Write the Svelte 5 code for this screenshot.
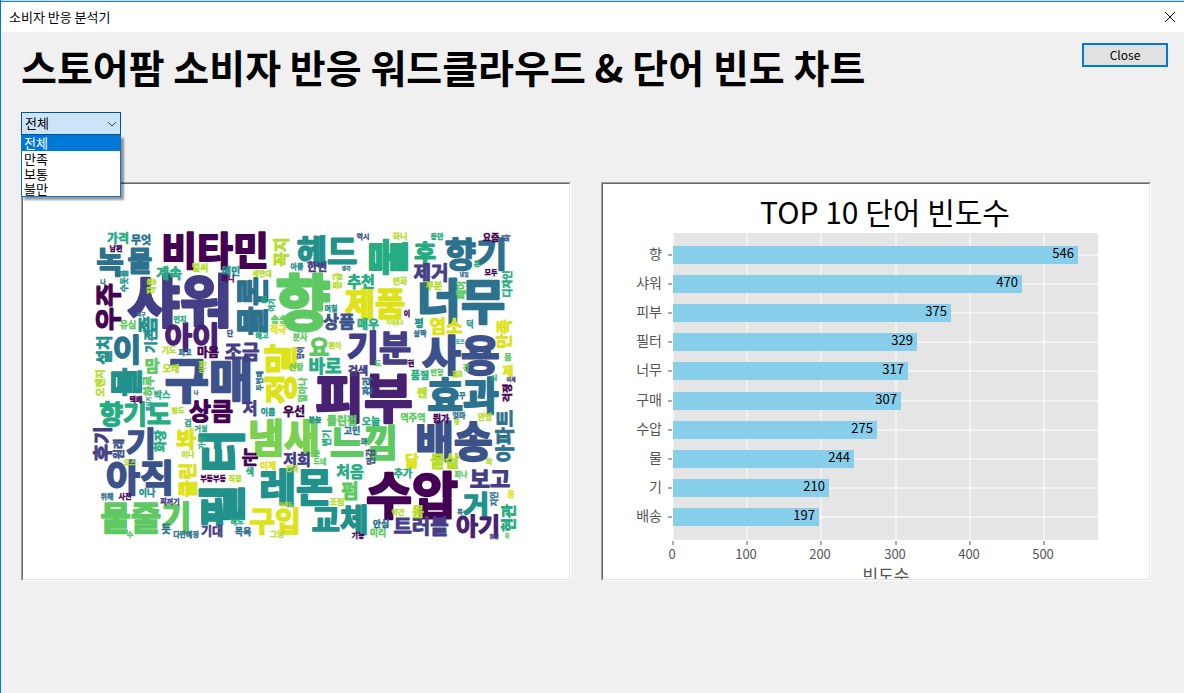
<script>
  const options = ['전체', '만족', '보통', '불만'];
  let selected = $state('전체');

  const bars = [
    ['향', 546], ['샤워', 470], ['피부', 375], ['필터', 329], ['너무', 317],
    ['구매', 307], ['수압', 275], ['물', 244], ['기', 210], ['배송', 197]
  ];
  const ticks = [0, 100, 200, 300, 400, 500];
  const scaleX = (v) => Math.round(70 + v * 0.742);
  const rowY = (i) => Math.round(71 + i * 29.1);

  const palette = {
    P: '#440154', V: '#482173', I: '#433e85', B: '#3b528b', S: '#2c728e',
    T: '#21918c', G: '#25ac82', L: '#5ec962', M: '#7ad151', Y: '#b5de2b', N: '#dde318'
  };

  // word, centre x, centre y, cell size, palette key, 1 when the word reads upwards
  const words = [
    ['가격', 118, 239, 13, 'G'], ['무엇', 141, 240, 12, 'S'], ['남편', 116, 248, 7, 'P'],
    ['녹', 110, 262, 32, 'S'], ['물', 140, 261, 29, 'S'], ['비타민', 215, 251, 42, 'P'],
    ['계속', 169, 273, 15, 'G'], ['벌써', 200, 268, 10, 'Y'], ['예민', 231, 271, 11, 'T'],
    ['머니', 228, 278, 7, 'P'], ['샤워', 180, 301, 61, 'I'], ['수돗물', 124, 281, 9, 'T', 1],
    ['나', 103, 282, 6, 'S'], ['작용', 152, 286, 10, 'Y', 1], ['우주', 108, 307, 28, 'P', 1],
    ['유심', 128, 325, 10, 'L'], ['좀', 148, 325, 20, 'T', 1], ['피구', 141, 314, 5, 'S'],
    ['먼지', 180, 319, 7, 'G'], ['아이', 192, 337, 32, 'V'], ['단', 230, 333, 7, 'B'],
    ['꼭지', 281, 252, 17, 'Y', 1], ['헤드', 327, 252, 36, 'T'], ['역시', 363, 236, 8, 'B'],
    ['한번', 317, 267, 12, 'I'], ['아들', 297, 266, 7, 'T'], ['생각', 346, 268, 5, 'S'],
    ['세면대', 262, 273, 8, 'Y'], ['향', 303, 303, 65, 'L'], ['물론', 252, 306, 34, 'S', 1],
    ['감', 264, 299, 8, 'G'], ['여기', 271, 305, 7, 'G', 1], ['등급', 338, 281, 10, 'Y', 1],
    ['추천', 361, 281, 16, 'G'], ['제품', 375, 304, 35, 'N'], ['며칠', 331, 308, 7, 'T'],
    ['상품', 339, 322, 18, 'B'], ['매우', 368, 325, 13, 'G'], ['송송', 279, 320, 10, 'L'],
    ['적극', 278, 330, 10, 'N'], ['배고', 262, 335, 7, 'G'], ['분사', 300, 337, 9, 'L'],
    ['하니', 400, 236, 9, 'Y'], ['동안', 437, 236, 7, 'G'], ['요즘', 491, 238, 10, 'P'],
    ['화', 506, 238, 9, 'B', 1], ['후', 425, 253, 26, 'G'], ['향기', 476, 254, 37, 'S'],
    ['분', 477, 263, 8, 'G'], ['냄일', 464, 274, 5, 'S'], ['모두', 491, 272, 7, 'P'],
    ['디자인', 507, 284, 11, 'G', 1], ['물', 388, 257, 44, 'G', 1], ['제거', 431, 273, 20, 'I'],
    ['변화', 400, 281, 9, 'Y'], ['부분', 434, 286, 10, 'Y'], ['페이', 461, 290, 11, 'L', 1],
    ['너무', 461, 301, 52, 'S'], ['이', 407, 313, 7, 'P'], ['기대음수', 395, 322, 5, 'Y'],
    ['평', 419, 323, 11, 'T'], ['살짝', 420, 333, 7, 'S'], ['염소', 446, 326, 19, 'N'],
    ['덕', 470, 324, 9, 'T'], ['만족', 504, 334, 17, 'N', 1], ['설치', 104, 350, 17, 'T', 1],
    ['이', 127, 350, 33, 'S'], ['기존', 150, 341, 14, 'T', 1], ['기도', 169, 350, 9, 'Y'],
    ['피고', 185, 352, 7, 'S'], ['마음', 208, 353, 13, 'P'], ['조금', 242, 352, 20, 'I'],
    ['오래', 171, 369, 10, 'Y'], ['구매', 209, 380, 52, 'B'], ['맘', 152, 366, 17, 'L'],
    ['하루', 149, 386, 12, 'L', 1], ['오렌지', 100, 383, 11, 'Y', 1], ['물', 126, 382, 34, 'T', 1],
    ['택배', 136, 399, 7, 'P'], ['박스', 162, 395, 10, 'G'], ['이번', 202, 367, 8, 'Y', 1],
    ['편리기', 148, 404, 5, 'T', 1], ['나', 196, 392, 5, 'B'], ['향기도', 135, 414, 28, 'G'],
    ['방도', 178, 410, 7, 'Y'], ['상큼', 211, 411, 26, 'P'], ['겁', 188, 423, 9, 'G'],
    ['거실', 201, 428, 7, 'G'], ['정말', 281, 374, 36, 'N', 1], ['요', 319, 347, 24, 'L'],
    ['향이', 300, 353, 7, 'B', 1], ['편이', 335, 345, 7, 'Y'], ['신랑', 296, 367, 9, 'L'],
    ['바로', 325, 366, 19, 'G'], ['기분', 379, 348, 38, 'I'], ['검색', 358, 371, 12, 'I'],
    ['관리', 367, 386, 11, 'S', 1], ['두번째', 259, 381, 7, 'S', 1], ['얼마나', 303, 390, 10, 'L', 1],
    ['피부', 364, 398, 57, 'V'], ['저', 250, 408, 17, 'I'], ['이름', 268, 412, 9, 'T'],
    ['우선', 294, 412, 13, 'P'], ['분높', 315, 419, 7, 'T'], ['클린펌', 342, 421, 12, 'L'],
    ['오늘', 371, 421, 11, 'G'], ['냄새', 284, 438, 42, 'M'], ['고민', 352, 431, 10, 'S'],
    ['사용', 461, 355, 45, 'B'], ['도', 378, 363, 7, 'L'], ['현', 411, 363, 7, 'P'],
    ['오즈', 460, 341, 5, 'G'], ['품질', 420, 375, 11, 'G'], ['반항', 437, 372, 7, 'L'],
    ['펌', 458, 374, 10, 'Y', 1], ['건', 466, 367, 8, 'L'], ['몸', 508, 357, 9, 'L'],
    ['시', 494, 377, 7, 'G'], ['제', 508, 372, 13, 'N'], ['미세', 511, 379, 5, 'I'],
    ['쎈', 422, 393, 12, 'Y'], ['효과', 463, 396, 42, 'S'], ['자꾸', 459, 395, 7, 'S'],
    ['걱정', 507, 393, 11, 'P', 1], ['역주역', 413, 418, 10, 'L'], ['뭔가', 441, 419, 10, 'P'],
    ['얼마', 459, 415, 7, 'S'], ['짱', 457, 422, 6, 'Y'], ['안방', 485, 417, 9, 'Y'],
    ['아파트', 505, 436, 20, 'S', 1], ['배송', 454, 441, 45, 'B'], ['느낌', 364, 443, 40, 'L'],
    ['후기', 103, 444, 20, 'I', 1], ['기', 141, 444, 36, 'B'], ['원래', 119, 449, 12, 'B', 1],
    ['화장', 161, 441, 13, 'G', 1], ['오스', 130, 462, 7, 'Y'], ['봐', 186, 439, 24, 'N'],
    ['이나', 188, 454, 8, 'Y'], ['가족', 201, 443, 8, 'G', 1], ['아직', 140, 478, 40, 'B'],
    ['클린', 188, 480, 20, 'N', 1], ['위해', 107, 496, 7, 'S'], ['사진', 125, 496, 7, 'P'],
    ['이나', 147, 493, 10, 'T'], ['찌꺼기', 170, 501, 7, 'I'], ['부등부등', 213, 478, 7, 'P'],
    ['직접', 235, 478, 7, 'Y'], ['필', 222, 506, 51, 'T', 1], ['터', 222, 451, 51, 'T', 1],
    ['물줄기', 146, 518, 36, 'L'], ['수', 130, 534, 7, 'L'], ['듯', 166, 529, 11, 'S'],
    ['다만예정', 186, 534, 7, 'S'], ['기대', 212, 532, 13, 'I'], ['눈', 250, 457, 19, 'P'],
    ['이제', 268, 466, 10, 'N'], ['색', 250, 472, 10, 'G'], ['저희', 297, 459, 16, 'I'],
    ['건과', 292, 468, 7, 'Y'], ['드네', 320, 461, 7, 'L'], ['문', 317, 453, 7, 'L'],
    ['변기', 327, 438, 10, 'G', 1], ['와', 364, 441, 8, 'S'], ['민감', 371, 457, 10, 'B', 1],
    ['처음', 350, 471, 16, 'G'], ['레몬', 296, 487, 43, 'T'], ['펌', 350, 491, 20, 'L'],
    ['조립', 337, 502, 9, 'Y'], ['아직도', 286, 504, 5, 'Y'], ['구입', 275, 522, 30, 'N'],
    ['교체', 340, 520, 33, 'T'], ['해도', 237, 521, 7, 'G'], ['목욕', 243, 532, 10, 'S'],
    ['그냥', 277, 534, 9, 'Y'], ['기능', 358, 535, 7, 'P'], ['미리', 378, 533, 10, 'L'],
    ['안심', 381, 524, 10, 'S'], ['추가', 403, 473, 11, 'G'], ['닮', 412, 460, 16, 'N'],
    ['물살', 445, 461, 17, 'Y'], ['착', 489, 461, 7, 'Y'], ['수압', 412, 495, 54, 'P'],
    ['피나', 461, 474, 7, 'L'], ['보고', 490, 479, 24, 'I'], ['약간', 398, 512, 7, 'Y'],
    ['몸', 418, 511, 14, 'Y'], ['거', 476, 506, 31, 'T'], ['폭', 460, 512, 6, 'S'],
    ['지인', 494, 499, 9, 'S', 1], ['용', 511, 494, 9, 'N'], ['현관', 508, 518, 16, 'G', 1],
    ['트러블', 421, 527, 22, 'I'], ['아기', 478, 526, 26, 'V'], ['환절', 494, 536, 5, 'I'],
    ['원', 507, 535, 5, 'L']
  ].sort((a, b) => b[3] - a[3]);

  // glyphs are set a little smaller than their cell so that neighbours stay apart
  const glyph = (cell) => Math.round(cell * 0.93);
</script>

<div class="window">
  <header class="titlebar">
    <span>소비자 반응 분석기</span>
    <button class="x" aria-label="닫기">
      <svg width="12" height="12" viewBox="0 0 12 12"><path d="M1 1L11 11M11 1L1 11" /></svg>
    </button>
  </header>

  <main>
    <div class="top">
      <h1>스토어팜 소비자 반응 워드클라우드 &amp; 단어 빈도 차트</h1>
      <button class="close">Close</button>
    </div>

    <div class="combo">
      <select aria-label="반응 선택" bind:value={selected}>
        {#each options as option}<option>{option}</option>{/each}
      </select>
      <svg class="arrow" width="10" height="6" viewBox="0 0 10 6"><path d="M1 1L5 5L9 1" /></svg>
      <ul>
        {#each options as option}
          <li><button class:active={option === selected} onclick={() => (selected = option)}>{option}</button></li>
        {/each}
      </ul>
    </div>

    <div class="panels">
      <section class="frame" aria-label="워드클라우드">
        <svg class="cloud" viewBox="23 184 546 395">
          {#each words as [word, x, y, size, color, up]}
            <text
              transform="translate({x} {y}){up ? ' rotate(-90)' : ''}"
              dy="0.37em"
              font-size={glyph(size)}
              fill={palette[color]}
              stroke={palette[color]}>{word}</text>
          {/each}
        </svg>
      </section>

      <section class="frame" aria-label="단어 빈도 차트">
        <svg class="chart" viewBox="0 0 546 395">
          <text class="title" x="282" y="40">TOP 10 단어 빈도수</text>
          <rect class="plot" x="70" y="49" width="425" height="307" />
          {#each ticks as t}
            <line class="grid" x1={scaleX(t)} x2={scaleX(t)} y1="49" y2="356" />
            <line class="tick" x1={scaleX(t)} x2={scaleX(t)} y1="357" y2="361" />
            <text class="label mid" x={scaleX(t) - 1} y="375">{t}</text>
          {/each}
          {#each bars as [name, value], i}
            <line class="grid" x1="70" x2="495" y1={rowY(i)} y2={rowY(i)} />
            <line class="tick" x1="65" x2="69" y1={rowY(i)} y2={rowY(i)} />
            <rect class="bar" x="70" y={rowY(i) - 9} width={scaleX(value) - 70} height="18" />
            <text class="name" x="59" y={rowY(i) + 4}>{name}</text>
            <text class="value" x={scaleX(value) - 4} y={rowY(i) + 3}>{value}</text>
          {/each}
          <text class="xlabel" x="283" y="398">빈도수</text>
        </svg>
      </section>
    </div>
  </main>
</div>

<style>
  :global(body) {
    background: #f0f0f0;
  }
  .window {
    box-sizing: border-box;
    min-height: 100vh;
    border-left: 1px solid #0078d7;
    background: #f0f0f0;
    box-shadow: inset 0 1px #d8d8d8;
    padding-top: 1px;
    font: 13px/15px "Noto Sans CJK KR", "Noto Sans", sans-serif;
    color: #000;
  }
  button,
  select {
    font: inherit;
    color: inherit;
  }
  .titlebar {
    display: flex;
    align-items: center;
    justify-content: space-between;
    height: 30px;
    padding: 0 8px;
    border-top: 1px solid #1a80d0;
    background: #fff;
  }
  .titlebar span {
    padding-bottom: 2px;
  }
  .x {
    display: flex;
    padding: 0;
    border: 0;
    background: none;
  }
  .x path,
  .arrow path {
    fill: none;
    stroke: #000;
  }
  .top {
    display: flex;
    align-items: flex-start;
    justify-content: space-between;
    padding: 11px 16px 0 20px;
  }
  h1 {
    margin: 0;
    font-size: 39px;
    line-height: 46px;
    font-weight: 700;
    white-space: nowrap;
  }
  .close {
    width: 86px;
    height: 24px;
    padding: 0 0 2px;
    border: 2px solid #0078d7;
    background: #e1e1e1;
    font-size: 12px;
  }
  .combo {
    position: relative;
    width: 100px;
    margin: 23px 0 0 20px;
  }
  select {
    display: block;
    appearance: none;
    box-sizing: border-box;
    width: 100%;
    height: 23px;
    padding: 0 3px 2px;
    border: 1px solid #005499;
    border-radius: 0;
    background: #cce4f7;
  }
  .arrow {
    position: absolute;
    right: 4px;
    top: 9px;
    pointer-events: none;
  }
  .arrow path {
    stroke: #444;
  }
  ul {
    position: absolute;
    z-index: 1;
    top: 23px;
    left: 0;
    right: 0;
    margin: 0;
    padding: 0;
    list-style: none;
    border: 1px solid #0078d7;
    border-top-width: 0;
    background: #fff;
    box-shadow: 3px 3px 2px rgba(0, 0, 0, 0.4);
  }
  li button {
    display: block;
    width: 100%;
    height: 15px;
    padding: 0 2px;
    border: 0;
    background: #fff;
    text-align: left;
    line-height: 14px;
  }
  li button.active {
    height: 16px;
    background: #0078d7;
    color: #fff;
  }
  .panels {
    display: grid;
    grid-template-columns: 1fr 1fr;
    gap: 30px;
    padding: 47px 33px 40px 20px;
  }
  .frame {
    border: 1px solid;
    border-color: #a0a0a0 #fff #fff #a0a0a0;
    background: #fff;
  }
  .frame svg {
    display: block;
    box-sizing: border-box;
    width: 100%;
    border: 1px solid;
    border-color: #696969 #e3e3e3 #e3e3e3 #696969;
    overflow: hidden;
  }
  .cloud text {
    font-weight: 700;
    text-anchor: middle;
    stroke-width: 0.05em;
    stroke-linejoin: round;
  }
  .plot {
    fill: #e5e5e5;
  }
  .grid {
    stroke: #fff;
  }
  .tick {
    stroke: #555;
  }
  .bar {
    fill: #87ceeb;
  }
  .label,
  .value {
    font-size: 13px;
  }
  .name {
    font-size: 14px;
    text-anchor: end;
  }
  .label,
  .name,
  .xlabel {
    fill: #555;
  }
  .value {
    text-anchor: end;
  }
  .title {
    font-size: 30px;
  }
  .xlabel {
    font-size: 17px;
  }
  .title,
  .mid,
  .xlabel {
    text-anchor: middle;
  }
</style>
